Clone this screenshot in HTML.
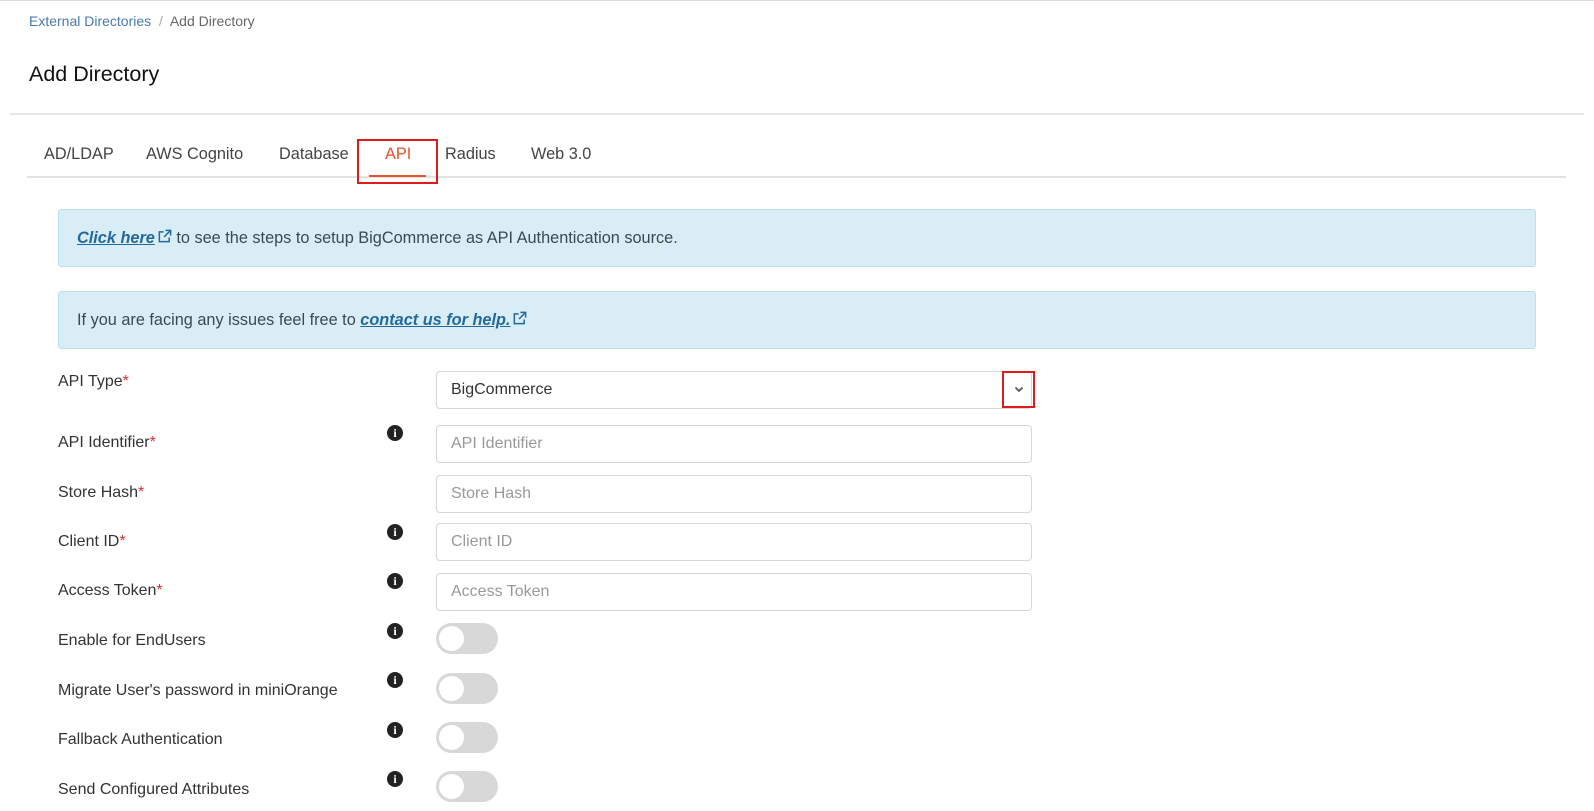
<!DOCTYPE html>
<html><head><style>
*{margin:0;padding:0;box-sizing:border-box}
body{width:1594px;height:811px;background:#fff;font-family:"Liberation Sans",sans-serif;position:relative;overflow:hidden;color:#333}
.a{position:absolute;white-space:nowrap}
.lbl{position:absolute;left:58px;font-size:16px;color:#333;white-space:nowrap}
.lbl b{color:#e03030;font-weight:normal}
.inp{position:absolute;left:436px;width:596px;height:38px;border:1px solid #d6d6d6;border-radius:4px;font-size:16px;color:#999;padding:9px 14px}
.tg{position:absolute;left:436px;width:62px;height:31px;border-radius:16px;background:#d8d8d8}
.tg::after{content:"";position:absolute;left:3px;top:3px;width:25px;height:25px;border-radius:50%;background:#fff}
.ic{position:absolute;left:387px;width:16px;height:16px;border-radius:50%;background:#222;color:#fff;font:bold 12px/16px "Liberation Serif",serif;text-align:center}
.al{position:absolute;left:58px;width:1478px;height:58px;background:#d9edf7;border:1px solid #bce0ee;border-radius:3px;font-size:16.3px;color:#3a4a55;padding:19px 18px 0;white-space:nowrap}
.al i{color:#236a9b;font-weight:bold;text-decoration:underline}
.tab{position:absolute;top:145px;font-size:16.3px;color:#444}
svg.ext{width:15px;height:15px;vertical-align:-1px;margin-left:2px}
</style></head><body>
<div class="a" style="left:0;top:0;width:1594px;height:1px;background:#ddd"></div>
<div class="a" style="left:29px;top:13px;font-size:14px;color:#4a7aa8">External Directories <span style="color:#aaa">&nbsp;/&nbsp;</span> <span style="color:#666">Add Directory</span></div>
<div class="a" style="left:29px;top:62px;font-size:21.5px;color:#111">Add Directory</div>
<div class="a" style="left:10px;top:113px;width:1574px;height:2px;background:#e6e6e6"></div>
<div class="tab" style="left:44px">AD/LDAP</div>
<div class="tab" style="left:146px">AWS Cognito</div>
<div class="tab" style="left:279px">Database</div>
<div class="tab" style="left:385px;color:#e8522f">API</div>
<div class="tab" style="left:445px">Radius</div>
<div class="tab" style="left:531px">Web 3.0</div>
<div class="a" style="left:27px;top:176px;width:1539px;height:2px;background:#e3e3e3"></div>
<div class="a" style="left:369px;top:175px;width:57px;height:2px;background:#e8522f"></div>
<div class="a" style="left:357px;top:139px;width:81px;height:45px;border:2px solid #e01b1b"></div>
<div class="al" style="top:209px"><i>Click here</i><svg class="ext" viewBox="0 0 16 16"><path d="M7 3H2.5v10.5H13V9M9 1.5h5.5V7M14.5 1.5L7.5 8.5" fill="none" stroke="#236a9b" stroke-width="1.6"/></svg> to see the steps to setup BigCommerce as API Authentication source.</div>
<div class="al" style="top:291px">If you are facing any issues feel free to <i>contact us for help.</i><svg class="ext" viewBox="0 0 16 16"><path d="M7 3H2.5v10.5H13V9M9 1.5h5.5V7M14.5 1.5L7.5 8.5" fill="none" stroke="#236a9b" stroke-width="1.6"/></svg></div>
<div class="lbl" style="top:373px">API Type<b>*</b></div>
<div class="inp" style="top:371px;color:#333">BigCommerce</div>
<svg class="a" style="left:1014px;top:386px" width="10" height="7" viewBox="0 0 10 7"><path d="M1.5 1.5L5 5L8.5 1.5" fill="none" stroke="#555" stroke-width="1.8"/></svg>
<div class="a" style="left:1002px;top:371px;width:33px;height:37px;border:2px solid #e01b1b"></div>
<div class="lbl" style="top:434px">API Identifier<b>*</b></div><div class="ic" style="top:425px">i</div>
<div class="inp" style="top:425px">API Identifier</div>
<div class="lbl" style="top:484px">Store Hash<b>*</b></div>
<div class="inp" style="top:475px">Store Hash</div>
<div class="lbl" style="top:533px">Client ID<b>*</b></div><div class="ic" style="top:524px">i</div>
<div class="inp" style="top:523px">Client ID</div>
<div class="lbl" style="top:582px">Access Token<b>*</b></div><div class="ic" style="top:573px">i</div>
<div class="inp" style="top:573px">Access Token</div>
<div class="lbl" style="top:632px">Enable for EndUsers</div><div class="ic" style="top:623px">i</div><div class="tg" style="top:623px"></div>
<div class="lbl" style="top:682px">Migrate User's password in miniOrange</div><div class="ic" style="top:672px">i</div><div class="tg" style="top:673px"></div>
<div class="lbl" style="top:731px">Fallback Authentication</div><div class="ic" style="top:722px">i</div><div class="tg" style="top:722px"></div>
<div class="lbl" style="top:781px">Send Configured Attributes</div><div class="ic" style="top:771px">i</div><div class="tg" style="top:771px"></div>
</body></html>
